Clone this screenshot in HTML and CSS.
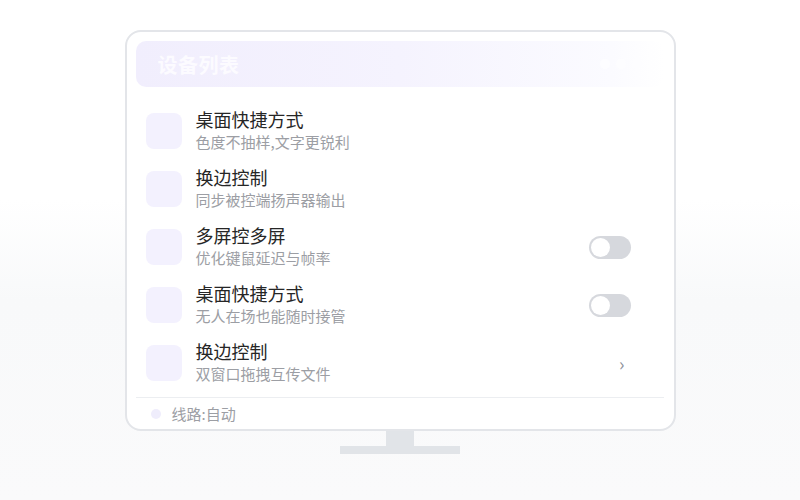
FILE: index.html
```html
<!DOCTYPE html>
<html lang="zh-CN">
<head>
  <meta charset="UTF-8">
  <meta name="viewport" content="width=device-width, initial-scale=1.0">
  <title>设备列表</title>
  <link rel="stylesheet" href="styles.css">
</head>
<body>
  <div class="monitor">
    <div class="screen">
      <div class="header">
        <h1>设备列表</h1>
        <div class="dots"><span></span><span></span><span></span></div>
      </div>

      <div class="list">
        <div class="row">
          <div class="icon"></div>
          <div class="text">
            <div class="title">桌面快捷方式</div>
            <div class="desc">色度不抽样,文字更锐利</div>
          </div>
        </div>
        <div class="row">
          <div class="icon"></div>
          <div class="text">
            <div class="title">换边控制</div>
            <div class="desc">同步被控端扬声器输出</div>
          </div>
        </div>
        <div class="row">
          <div class="icon"></div>
          <div class="text">
            <div class="title">多屏控多屏</div>
            <div class="desc">优化键鼠延迟与帧率</div>
          </div>
          <div class="toggle"><span class="knob"></span></div>
        </div>
        <div class="row">
          <div class="icon"></div>
          <div class="text">
            <div class="title">桌面快捷方式</div>
            <div class="desc">无人在场也能随时接管</div>
          </div>
          <div class="toggle"><span class="knob"></span></div>
        </div>
        <div class="row">
          <div class="icon"></div>
          <div class="text">
            <div class="title">换边控制</div>
            <div class="desc">双窗口拖拽互传文件</div>
          </div>
          <div class="chevron">›</div>
        </div>
      </div>

      <div class="footer">
        <span class="dot"></span>
        <span class="route">线路:自动</span>
      </div>
    </div>
    <div class="neck"></div>
    <div class="base"></div>
  </div>
</body>
</html>
```

FILE: styles.css
```css
body {
  margin: 0;
  height: 500px;
  font-family: "Noto Sans CJK SC", "Noto Sans", sans-serif;
  background: linear-gradient(to bottom, #ffffff 0%, #ffffff 40%, #f8f9fa 60%, #fafafb 100%);
  overflow: hidden;
}
.monitor {
  display: flex;
  flex-direction: column;
  align-items: center;
  padding-top: 30px;
}
.screen {
  box-sizing: border-box;
  width: 551px;
  height: 401px;
  border: 2px solid #e3e5e9;
  border-radius: 16px;
  background: #fff;
  padding: 9px 10px 0 9px;
}
.header {
  height: 46px;
  border-radius: 10px;
  background: linear-gradient(to right, #f1eefd 0%, #f5f3fe 50%, #fbfbff 90%, #ffffff 100%);
  display: flex;
  align-items: center;
  justify-content: space-between;
  padding: 0 22px 0 22px;
}
.header h1 {
  margin: 0;
  font-size: 20px;
  font-weight: bold;
  color: #fcfbff;
  letter-spacing: 0.5px;
}
.dots {
  display: flex;
  gap: 6px;
}
.dots span {
  width: 10px;
  height: 10px;
  border-radius: 50%;
  background: #fdfdff;
}
.list {
  padding-top: 15px;
}
.row {
  display: flex;
  align-items: center;
  padding: 11px 33px 11px 10px;
  height: 36px;
}
.icon {
  width: 36px;
  height: 36px;
  border-radius: 8px;
  background: #f3f1fe;
  flex-shrink: 0;
}
.text {
  flex: 1;
  margin-left: 14px;
  margin-bottom: 4px;
}
.title {
  font-size: 18px;
  line-height: 24px;
  color: #262626;
}
.desc {
  font-size: 15px;
  line-height: 21px;
  color: #9c9ea4;
}
.toggle {
  box-sizing: border-box;
  width: 42px;
  height: 23px;
  border-radius: 12px;
  background: #d6d8dd;
  padding: 2px;
}
.knob {
  display: block;
  width: 19px;
  height: 19px;
  border-radius: 50%;
  background: #fff;
}
.chevron {
  width: 42px;
  text-align: right;
  padding-right: 6px;
  box-sizing: border-box;
  font-size: 18px;
  color: #8d9099;
}
.footer {
  margin-top: 5px;
  border-top: 1px solid #eceef1;
  display: flex;
  align-items: center;
  height: 32px;
  padding-left: 15px;
}
.dot {
  width: 10px;
  height: 10px;
  border-radius: 50%;
  background: #efedfc;
}
.route {
  margin-left: 11px;
  font-size: 15px;
  line-height: 20px;
  color: #9c9ea4;
}
.neck {
  width: 28px;
  height: 15px;
  background: #e1e4e8;
}
.base {
  width: 120px;
  height: 8px;
  background: #e1e4e8;
}
```
